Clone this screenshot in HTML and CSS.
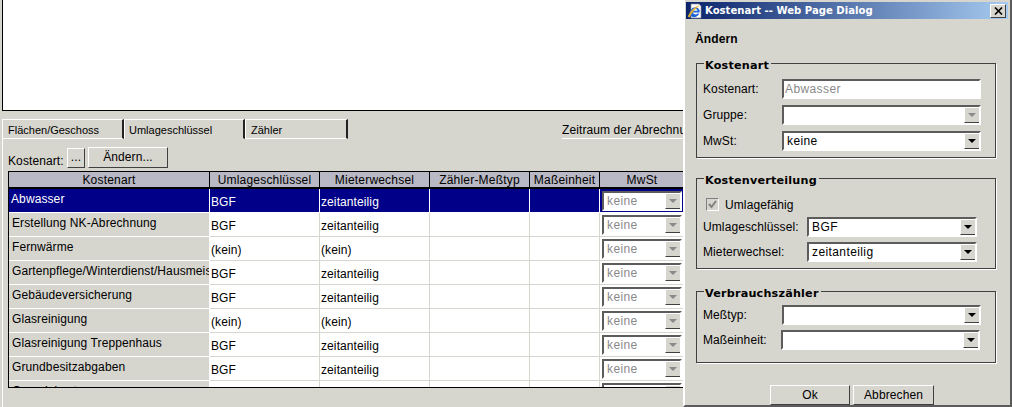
FILE: index.html
```html
<!DOCTYPE html>
<html lang="de">
<head>
<meta charset="utf-8">
<title>Kostenart</title>
<link rel="stylesheet" href="styles.css">
</head>
<body>
<div class="page">
  <div class="top-pane"></div>
  <div class="tabbar">
    <div class="tab tab-first">Flächen/Geschoss</div>
    <div class="tab tab-active">Umlageschlüssel</div>
    <div class="tab tab-last">Zähler</div>
    <div class="period">Zeitraum der Abrechnung:</div>
  </div>
  <div class="panel">
    <div class="toolbar">
      <span class="toolbar-label">Kostenart:</span>
      <button class="btn btn-dots">...</button>
      <button class="btn btn-edit">Ändern...</button>
    </div>
    <div class="grid-wrap">
      <table class="grid">
        <colgroup>
          <col class="c1"><col class="c2"><col class="c3"><col class="c4"><col class="c5"><col class="c6">
        </colgroup>
        <thead>
          <tr><th>Kostenart</th><th>Umlageschlüssel</th><th>Mieterwechsel</th><th>Zähler-Meßtyp</th><th>Maßeinheit</th><th>MwSt</th></tr>
        </thead>
        <tbody>
          <tr class="selected"><td>Abwasser</td><td>BGF</td><td>zeitanteilig</td><td></td><td></td><td><div class="select disabled small"><span class="value">keine</span><span class="arrow"></span></div></td></tr>
          <tr><td>Erstellung NK-Abrechnung</td><td>BGF</td><td>zeitanteilig</td><td></td><td></td><td><div class="select disabled small"><span class="value">keine</span><span class="arrow"></span></div></td></tr>
          <tr><td>Fernwärme</td><td>(kein)</td><td>(kein)</td><td></td><td></td><td><div class="select disabled small"><span class="value">keine</span><span class="arrow"></span></div></td></tr>
          <tr><td>Gartenpflege/Winterdienst/Hausmeister</td><td>BGF</td><td>zeitanteilig</td><td></td><td></td><td><div class="select disabled small"><span class="value">keine</span><span class="arrow"></span></div></td></tr>
          <tr><td>Gebäudeversicherung</td><td>BGF</td><td>zeitanteilig</td><td></td><td></td><td><div class="select disabled small"><span class="value">keine</span><span class="arrow"></span></div></td></tr>
          <tr><td>Glasreinigung</td><td>(kein)</td><td>(kein)</td><td></td><td></td><td><div class="select disabled small"><span class="value">keine</span><span class="arrow"></span></div></td></tr>
          <tr><td>Glasreinigung Treppenhaus</td><td>BGF</td><td>zeitanteilig</td><td></td><td></td><td><div class="select disabled small"><span class="value">keine</span><span class="arrow"></span></div></td></tr>
          <tr><td>Grundbesitzabgaben</td><td>BGF</td><td>zeitanteilig</td><td></td><td></td><td><div class="select disabled small"><span class="value">keine</span><span class="arrow"></span></div></td></tr>
          <tr><td>Gemeinkosten</td><td>BGF</td><td>zeitanteilig</td><td></td><td></td><td><div class="select disabled small"><span class="value">keine</span><span class="arrow"></span></div></td></tr>
        </tbody>
      </table>
    </div>
  </div>

  <div class="dialog">
    <div class="titlebar">
      <svg class="ie-icon" width="16" height="16" viewBox="0 0 16 16" aria-hidden="true">
        <path d="M4 1h8l2 2v12H4z" fill="#fff" stroke="#8a8a9a" stroke-width=".7"/>
        <path d="M4.600 13.500C2.500 11 3 6.500 6 4.800c2.600-1.400 6-.2 6.600 2.800.1.600.1 1.400 0 2H6c.2 2 3.200 2.400 4.700.9h1.700c-1.600 3.400-5.700 4.600-7.800 3zM6.100 7.800h4.500C10.300 5.600 6.700 5.500 6.100 7.800z" fill="#1c62d8"/>
        <path d="M1 13c2-5 6-9 12-11-3 3-8 7-10 12-1 .6-2.200.2-2-1z" fill="#e9b532" opacity=".9"/>
      </svg>
      <span class="title-text">Kostenart -- Web Page Dialog</span>
      <button class="close" aria-label="Schließen">
        <svg width="9" height="8" viewBox="0 0 9 8" aria-hidden="true"><path d="M1 .5l7 7M8 .5l-7 7" fill="none" stroke="#000" stroke-width="1.600"/></svg>
      </button>
    </div>
    <div class="dialog-heading">Ändern</div>

    <fieldset class="group group-a">
      <legend>Kostenart</legend>
      <div class="form-row">
        <label>Kostenart:</label>
        <div class="input disabled">Abwasser</div>
      </div>
      <div class="form-row">
        <label>Gruppe:</label>
        <div class="select disabled"><span class="value"></span><span class="arrow"></span></div>
      </div>
      <div class="form-row">
        <label>MwSt:</label>
        <div class="select"><span class="value">keine</span><span class="arrow"></span></div>
      </div>
    </fieldset>

    <fieldset class="group group-b">
      <legend>Kostenverteilung</legend>
      <div class="check-row">
        <span class="check">
          <svg width="9" height="9" viewBox="0 0 9 9" aria-hidden="true"><path d="M1 4l2.500 3L8 1" fill="none" stroke="#808080" stroke-width="2"/></svg>
        </span>
        <span>Umlagefähig</span>
      </div>
      <div class="form-row narrow">
        <label>Umlageschlüssel:</label>
        <div class="select"><span class="value">BGF</span><span class="arrow"></span></div>
      </div>
      <div class="form-row narrow">
        <label>Mieterwechsel:</label>
        <div class="select"><span class="value">zeitanteilig</span><span class="arrow"></span></div>
      </div>
    </fieldset>

    <fieldset class="group group-c">
      <legend>Verbrauchszähler</legend>
      <div class="form-row">
        <label>Meßtyp:</label>
        <div class="select"><span class="value"></span><span class="arrow"></span></div>
      </div>
      <div class="form-row shifted">
        <label>Maßeinheit:</label>
        <div class="select"><span class="value"></span><span class="arrow"></span></div>
      </div>
    </fieldset>

    <div class="dialog-actions">
      <button class="btn btn-ok">Ok</button>
      <button class="btn btn-cancel">Abbrechen</button>
    </div>
  </div>
</div>
</body>
</html>
```

FILE: styles.css
```css
* { box-sizing: border-box; }
html, body { margin: 0; padding: 0; }
body {
  width: 1012px;
  height: 407px;
  overflow: hidden;
  background: #d6d5ce;
  font-family: "Liberation Sans", Arial, sans-serif;
  font-size: 12px;
  letter-spacing: .1px;
  color: #000;
}
.page {
  position: relative;
  width: 1012px;
  height: 407px;
  overflow: hidden;
  padding-left: 2px;
}

/* Upper pane */
.top-pane {
  height: 111px;
  background: #fff;
  border-left: 1px solid #000;
  border-bottom: 1px solid #000;
}

/* Tabs */
.tabbar {
  display: flex;
  height: 20px;
  margin-top: 8px;
  position: relative;
  z-index: 1;
  white-space: nowrap;
}
.tab {
  height: 20px;
  padding: 3px 0 0 3px;
  font-size: 11px;
  letter-spacing: 0;
  line-height: 14px;
  border-top: 1px solid #fff;
  border-left: 1px solid #fff;
  border-right: 2px solid #222;
  border-bottom: 1px solid #fff;
}
.tab-first { width: 122px; padding-left: 5px; }
.tab-active { width: 121px; border-bottom-color: #d6d5ce; padding-left: 4px; }
.tab-last { width: 103px; padding-left: 5px; }
.period {
  margin-left: 214px;
  padding-top: 4px;
  line-height: 14px;
  flex: 1;
  height: 20px;
  border-bottom: 1px solid #fff;
}

/* Panel */
.panel {
  height: 268px;
  border-left: 1px solid #fff;
  padding: 8px 0 0 5px;
}
.toolbar {
  display: flex;
  align-items: flex-end;
  height: 21px;
}
.toolbar-label { width: 59px; line-height: 14px; }
.btn {
  font: inherit;
  letter-spacing: inherit;
  color: #000;
  background: #d6d5ce;
  padding: 0;
  border: 1px solid;
  border-color: #fff #404040 #404040 #fff;
  line-height: 13px;
}
.btn-dots { width: 18px; height: 20px; padding-bottom: 2px; }
.btn-edit { width: 80px; height: 21px; margin-left: 3px; padding-bottom: 1px; }

/* Table */
.grid-wrap {
  width: 690px;
  height: 217px;
  margin-top: 3px;
  border: 1px solid #000;
  overflow: hidden;
}
.grid {
  table-layout: fixed;
  border-collapse: separate;
  border-spacing: 0;
  width: 675px;
}
.c1 { width: 201px; }
.c2 { width: 110px; }
.c3 { width: 110px; }
.c4 { width: 100px; }
.c5 { width: 70px; }
.c6 { width: 84px; }
.grid th {
  height: 17px;
  padding: 0;
  font-weight: normal;
  line-height: 14px;
  letter-spacing: .2px;
  background: #b9b9c5;
  border-right: 1px solid #000;
  border-bottom: 2px solid #000;
  overflow: hidden;
  white-space: nowrap;
}
.grid th:last-child { border-right: 0; }
.grid td {
  height: 24px;
  padding: 2px 0 0 1px;
  line-height: 14px;
  background: #fff;
  border-right: 1px solid #d6d5ce;
  border-bottom: 1px solid #d6d5ce;
  white-space: nowrap;
  overflow: hidden;
}
.grid td:first-child {
  background: #d6d5ce;
  border-right: 1px solid #fff;
  border-bottom-color: #fff;
  vertical-align: top;
  padding: 3px 0 0 3px;
}
.grid td:last-child { border-right: 0; padding: 0 0 0 2px; }
.selected td, .grid .selected td:first-child {
  background: #000088;
  color: #fff;
  border-right-color: #fff;
  border-bottom-color: #fff;
}
.grid .selected td:first-child { padding-left: 2px; }

/* Controls */
.select, .input {
  display: flex;
  align-items: center;
  height: 20px;
  width: 199px;
  background: #fff;
  color: #000;
  border: 2px solid;
  border-color: #5c5c5c #fff #fff #5c5c5c;
  overflow: hidden;
}
.select .value {
  flex: 1;
  padding-left: 3px;
  line-height: 14px;
  letter-spacing: .4px;
  white-space: nowrap;
  overflow: hidden;
}
.select .arrow {
  position: relative;
  flex: none;
  width: 16px;
  height: 16px;
  margin-right: -1px;
  background: #d6d5ce;
  border: 1px solid;
  border-color: #fff #404040 #404040 #fff;
}
.select .arrow::after {
  content: "";
  position: absolute;
  left: 3px;
  top: 5px;
  border: 4px solid transparent;
  border-top-color: #000;
  border-bottom: 0;
}
.select.disabled .value, .input.disabled { color: #8a8a8a; }
.select.disabled .arrow::after { border-top-color: #8a8a8a; }
.input { padding-left: 1px; line-height: 14px; letter-spacing: .4px; }
.select.small { width: 80px; }

/* Dialog window */
.dialog {
  position: absolute;
  left: 683px;
  top: 0;
  width: 329px;
  height: 407px;
  z-index: 5;
  background: #d6d5ce;
  border-left: 2px solid #fff;
  border-right: 2px solid #5c5c5c;
  border-bottom: 2px solid #5c5c5c;
  padding: 2px 0 0 1px;
}
.titlebar {
  display: flex;
  align-items: center;
  height: 17px;
  width: 322px;
  padding: 0 2px 0 1px;
  background: linear-gradient(90deg, #0a246a, #a6caf0);
  color: #fff;
  font-family: "DejaVu Sans", "Liberation Sans", sans-serif;
  font-weight: bold;
  font-size: 10.100px;
  letter-spacing: 0;
}
.ie-icon { flex: none; }
.title-text { margin-left: 2px; flex: 1; white-space: nowrap; }
.close {
  flex: none;
  display: flex;
  align-items: center;
  justify-content: center;
  width: 16px;
  height: 14px;
  padding: 0;
  background: #d6d5ce;
  border: 1px solid;
  border-color: #fff #404040 #404040 #fff;
}
.dialog-heading {
  margin: 13px 0 0 9px;
  font-weight: bold;
  line-height: 14px;
  height: 14px;
}

/* Group boxes */
.group {
  position: relative;
  margin: 0 0 0 10px;
  padding: 0 0 0 6px;
  width: 300px;
  min-width: 0;
  border: 1px solid #404040;
  box-shadow: 1px 1px 0 #fff;
}
.group legend {
  font-family: "DejaVu Sans", sans-serif;
  font-weight: bold;
  font-size: 11.200px;
  line-height: 14px;
  letter-spacing: .2px;
  padding: 5px 2px 0 1px;
  margin-left: 1px;
}
.group-a { height: 104px; margin-top: 8px; padding-top: 3px; }
.group-b { height: 100px; margin-top: 11px; padding-top: 7px; }
.group-c { height: 81px; margin-top: 13px; padding-top: 1px; }
.form-row {
  display: flex;
  align-items: center;
  height: 25.500px;
}
.group-a .form-row { height: 26px; }
.form-row label { width: 79px; flex: none; line-height: 14px; white-space: nowrap; }
.form-row.narrow label { width: 104px; }
.form-row.narrow .select { width: 170px; }
.form-row.shifted label { width: 78px; }
.check-row {
  display: flex;
  align-items: center;
  height: 19px;
  padding-left: 3px;
  gap: 6px;
}
.check {
  display: flex;
  align-items: center;
  justify-content: center;
  width: 13px;
  height: 13px;
  background: #d6d5ce;
  border: 1px solid;
  border-color: #808080 #fff #fff #808080;
}

/* Actions */
.dialog-actions {
  display: flex;
  gap: 3px;
  margin: 22px 0 0 84px;
}
.btn-ok { width: 80px; height: 20px; }
.btn-cancel { width: 81px; height: 20px; }
```
